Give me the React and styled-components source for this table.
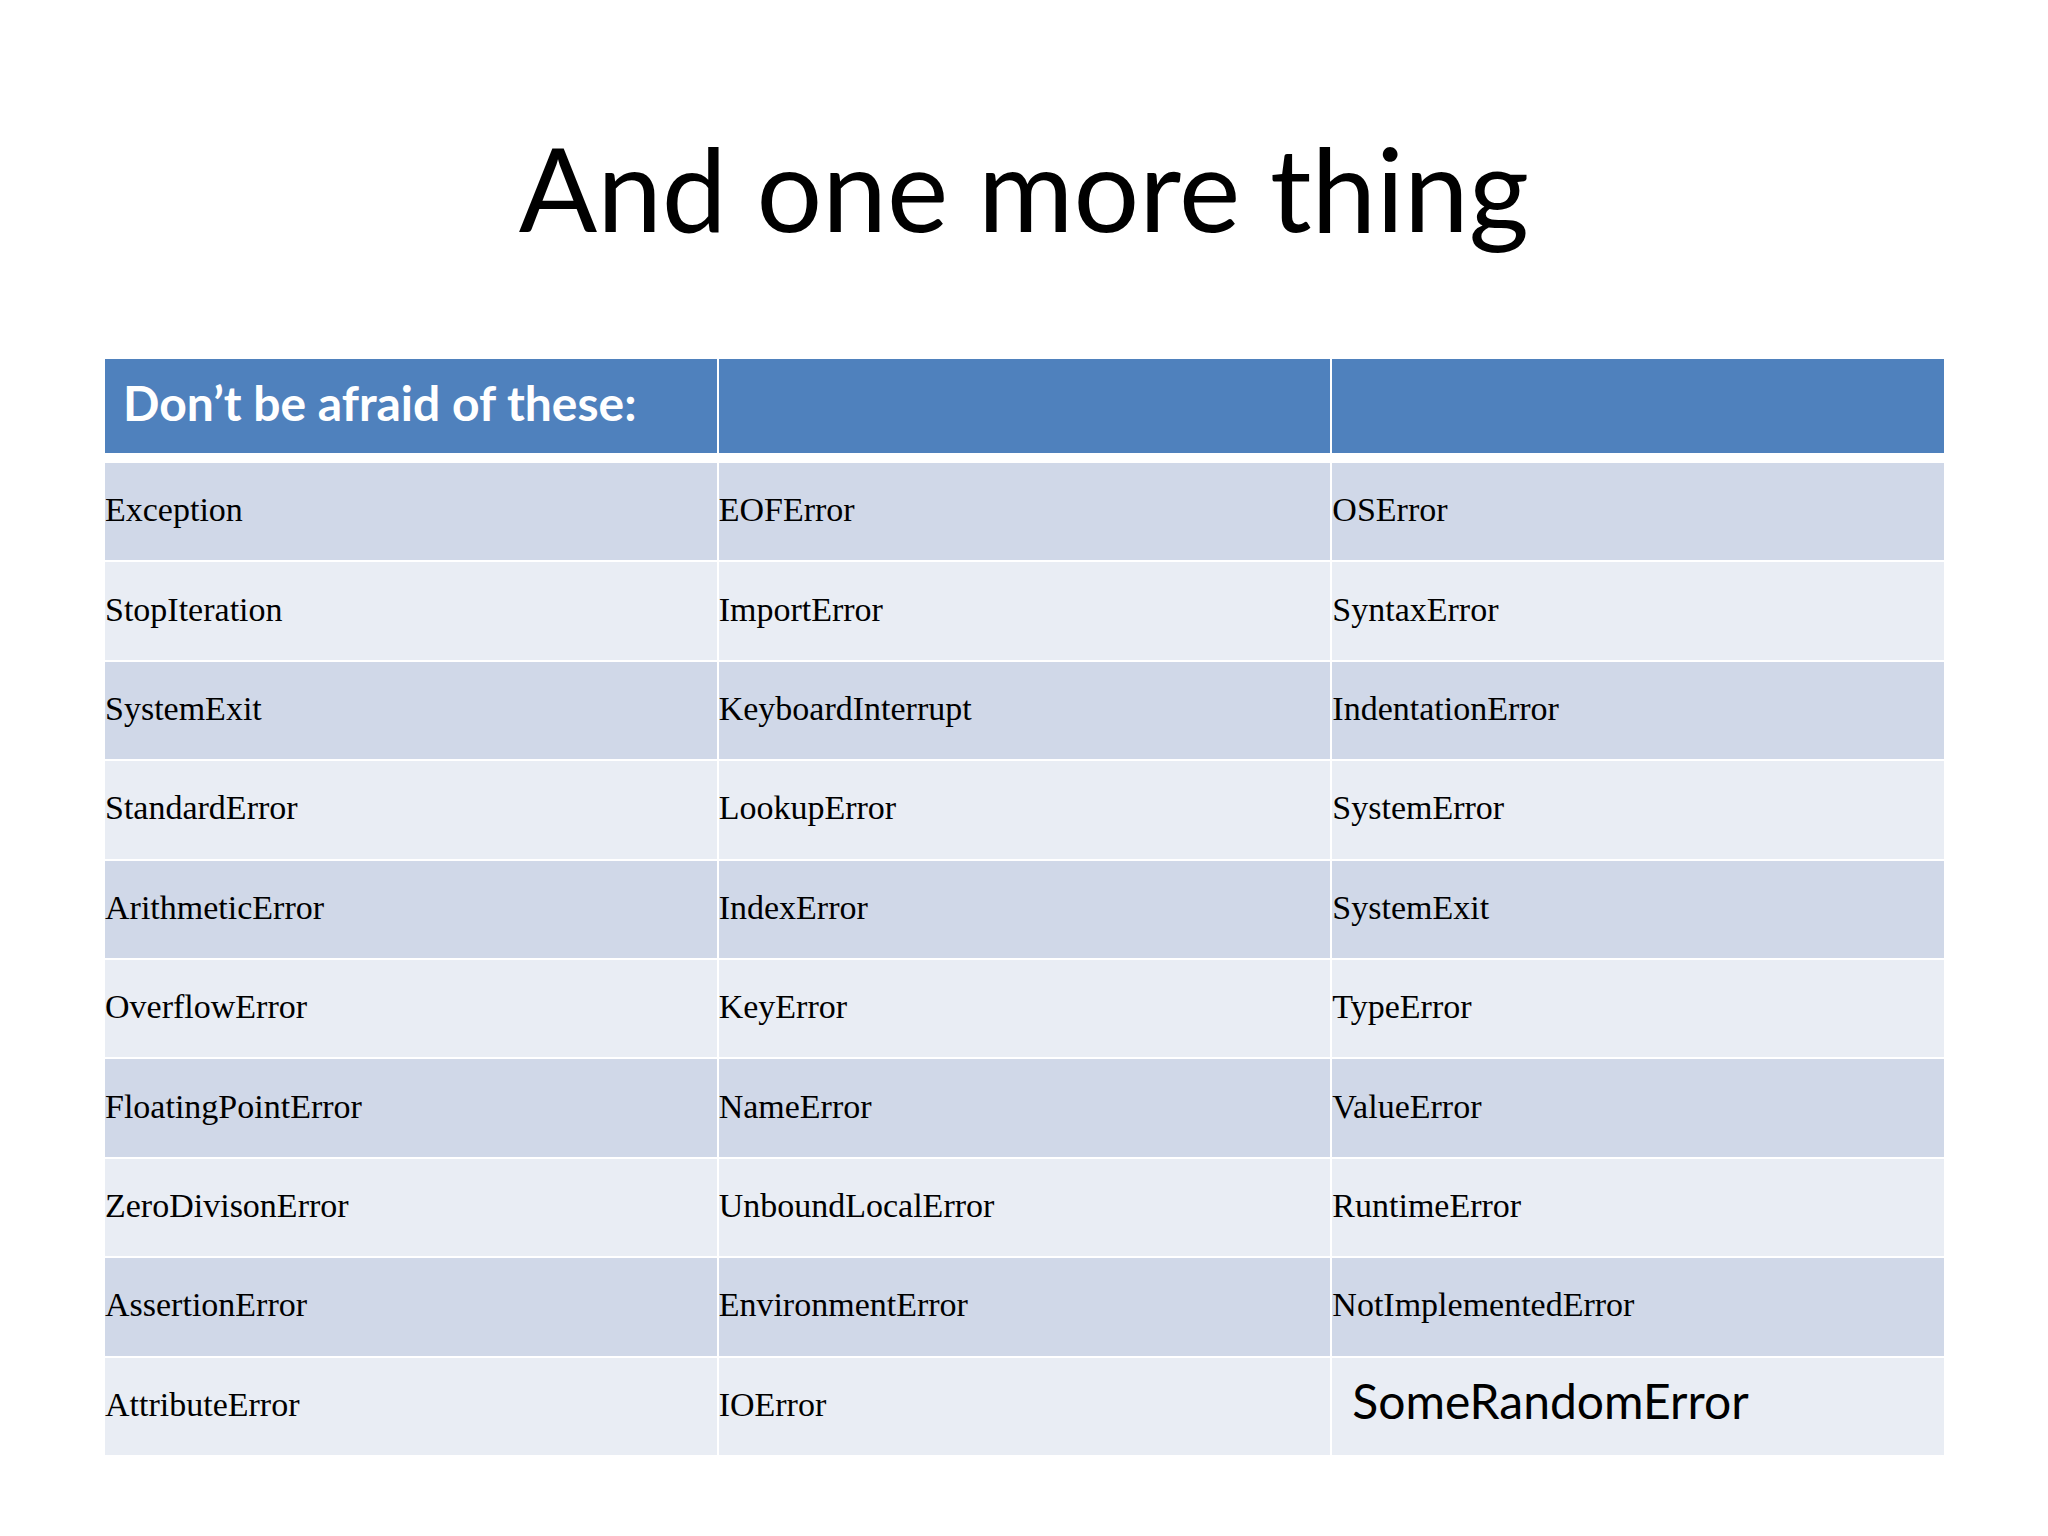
import styled, { createGlobalStyle } from "styled-components";

const GlobalStyle = createGlobalStyle`
  html, body {
    margin: 0;
    padding: 0;
    background: #ffffff;
  }
`;

const rows = [
  ["Exception", "EOFError", "OSError"],
  ["StopIteration", "ImportError", "SyntaxError"],
  ["SystemExit", "KeyboardInterrupt", "IndentationError"],
  ["StandardError", "LookupError", "SystemError"],
  ["ArithmeticError", "IndexError", "SystemExit"],
  ["OverflowError", "KeyError", "TypeError"],
  ["FloatingPointError", "NameError", "ValueError"],
  ["ZeroDivisonError", "UnboundLocalError", "RuntimeError"],
  ["AssertionError", "EnvironmentError", "NotImplementedError"],
  ["AttributeError", "IOError", null],
];

const App = () => {
  return (
    <Slide>
      <GlobalStyle />
      <Title>And one more thing</Title>
      <ErrorTable>
        <HeaderCell>Don’t be afraid of these:</HeaderCell>
        <HeaderCell />
        <HeaderCell />
        <HeaderGap />
        {rows.map((row, i) =>
          row.map((name, j) => (
            <BodyCell key={`${i}-${j}`} band={i % 2 === 0}>
              {name === null ? <SansNote>SomeRandomError</SansNote> : name}
            </BodyCell>
          ))
        )}
      </ErrorTable>
    </Slide>
  );
};

export default App;

const Slide = styled.div`
  width: 2048px;
  height: 1536px;
  display: flex;
  flex-direction: column;
  align-items: center;
  box-sizing: border-box;
  padding-top: 130px;
  background: #ffffff;
`;

const Title = styled.h1`
  margin: 0;
  font-family: Lato, "Open Sans", sans-serif;
  font-weight: 400;
  font-size: 116px;
  line-height: 1;
  color: #000000;
`;

const ErrorTable = styled.div`
  width: 1839px;
  margin-top: 113px;
  margin-left: 1px;
  display: grid;
  grid-template-columns: repeat(3, 1fr);
  grid-template-rows: 94px 6px;
  grid-auto-rows: 97.4px;
  column-gap: 2px;
  row-gap: 2px;
`;

const HeaderCell = styled.div`
  background: #4f81bd;
  display: flex;
  align-items: center;
  padding: 0 0 8px 18px;
  font-family: Lato, "Open Sans", sans-serif;
  font-weight: 700;
  font-size: 48px;
  color: #ffffff;
  white-space: nowrap;
`;

const HeaderGap = styled.div`
  grid-column: 1 / -1;
`;

const BodyCell = styled.div`
  background: ${({ band }) => (band ? "#d0d8e8" : "#e9edf4")};
  display: flex;
  align-items: center;
  padding: 0 0 3px 0;
  font-family: "Liberation Serif", "Times New Roman", serif;
  font-size: 34px;
  color: #000000;
  white-space: nowrap;
`;

const SansNote = styled.span`
  font-family: Lato, "Open Sans", sans-serif;
  font-size: 48px;
  padding: 0 0 8px 20px;
`;
